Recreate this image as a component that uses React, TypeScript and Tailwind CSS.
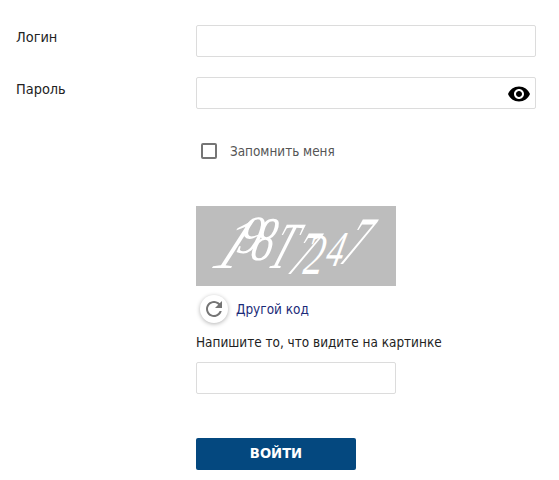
import React from "react";

const font = "font-['DejaVu_Sans_Condensed','Noto_Sans',sans-serif]";

function Row({ label, children }: { label: string; children: React.ReactNode }) {
  return (
    <div className="flex">
      <label className="w-[196px] pl-[16px] pt-[2px] text-[14.4px] leading-[20px] text-[#222]">{label}</label>
      {children}
    </div>
  );
}

const Input = ({ w }: { w: string }) => (
  <input className={`${w} h-[32px] rounded-[2px] border border-[#dcdcdc] bg-white outline-none`} />
);

const captcha: [string, number, number, number, number, number][] = [
  ["1", 14, 62, 0.75, -27, 72],
  ["9", 39, 47, 0.85, -16, 54],
  ["8", 53, 54, 0.7, -14, 62],
  ["T", 70, 62, 0.55, -22, 66],
  ["7", 90, 68, 0.6, -24, 62],
  ["2", 106, 68, 0.68, -10, 58],
  ["4", 128, 60, 0.68, -14, 50],
  ["7", 142, 58, 0.58, -24, 68],
];

export default function App() {
  return (
    <div className={`${font} w-[559px] h-[480px] overflow-hidden bg-white pt-[25px]`}>
      <Row label="Логин">
        <Input w="w-[340px]" />
      </Row>
      <div className="mt-[20px]">
        <Row label="Пароль">
          <div className="relative w-[340px] h-[32px]">
            <Input w="w-[340px]" />
            <svg className="absolute right-[5px] top-[5px]" width="24" height="24" viewBox="0 0 24 24" fill="#000">
              <path d="M12 4.5C7 4.5 2.73 7.61 1 12c1.73 4.39 6 7.5 11 7.5s9.27-3.11 11-7.5c-1.73-4.39-6-7.5-11-7.5zM12 17c-2.76 0-5-2.24-5-5s2.24-5 5-5 5 2.24 5 5-2.24 5-5 5zm0-8c-1.66 0-3 1.34-3 3s1.34 3 3 3 3-1.34 3-3-1.34-3-3-3z" />
            </svg>
          </div>
        </Row>
      </div>
      <div className="ml-[196px] mt-[33px] flex items-center pl-[5px] h-[18px]">
        <span className="w-[16px] h-[16px] rounded-[2px] border-2 border-[#757575] bg-white" />
        <span className="ml-[13px] pt-[1px] text-[13.4px] leading-[18px] text-[#555]">Запомнить меня</span>
      </div>
      <div className="ml-[196px] mt-[46px] w-[200px] h-[80px] bg-[#bdbdbd]">
        <svg width="200" height="80" viewBox="0 0 200 80" fill="#fff" fontFamily="Liberation Serif, serif" fontStyle="italic">
          {captcha.map(([c, x, y, sx, sk, fs], i) => (
            <text key={i} transform={`translate(${x} ${y}) skewX(${sk}) scale(${sx} 1)`} fontSize={fs}>
              {c}
            </text>
          ))}
        </svg>
      </div>
      <div className="ml-[196px] mt-[9px] flex items-center h-[28px]">
        <span className="ml-[4px] flex w-[28px] h-[28px] items-center justify-center rounded-full bg-white shadow-[0_1px_4px_rgba(0,0,0,0.3)]">
          <svg width="24" height="24" viewBox="0 0 24 24" fill="#757575">
            <path d="M17.65 6.35C16.2 4.9 14.21 4 12 4c-4.42 0-7.99 3.58-7.99 8s3.57 8 7.99 8c3.73 0 6.84-2.55 7.73-6h-2.08c-.82 2.33-3.04 4-5.65 4-3.31 0-6-2.69-6-6s2.69-6 6-6c1.66 0 3.14.69 4.22 1.78L13 11h7V4l-2.35 2.35z" />
          </svg>
        </span>
        <span className="ml-[8px] pt-[1px] text-[13.45px] leading-[20px] text-[#1a2a78]">Другой код</span>
      </div>
      <div className="ml-[196px] mt-[10px] text-[13.45px] leading-[20px] text-[#222]">Напишите то, что видите на картинке</div>
      <div className="ml-[196px] mt-[9px]">
        <Input w="w-[200px] block" />
      </div>
      <div className="ml-[196px] mt-[44px]">
        <button className="w-[160px] h-[32px] rounded-[2px] bg-[#04487f] font-['DejaVu_Sans',sans-serif] text-[13.2px] font-bold text-white">ВОЙТИ</button>
      </div>
    </div>
  );
}
